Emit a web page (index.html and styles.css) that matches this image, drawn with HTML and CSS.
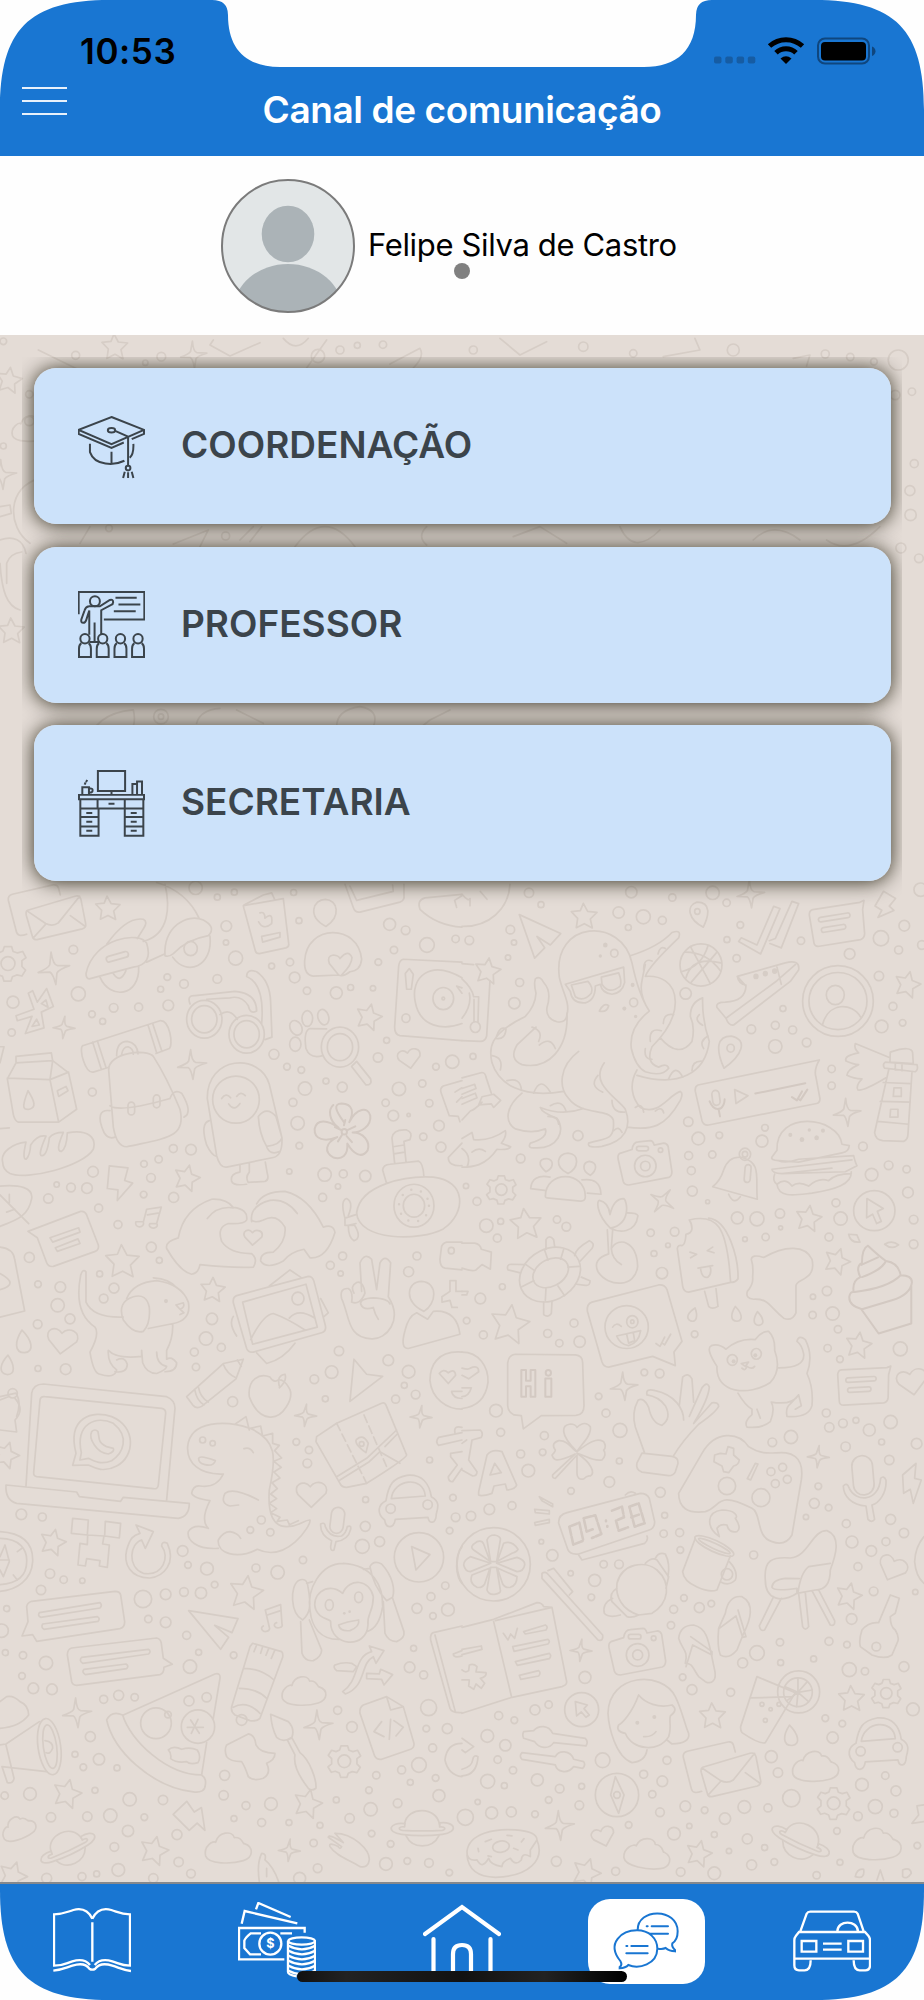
FILE: index.html
```html
<!DOCTYPE html>
<html lang="pt-BR">
<head>
  <meta charset="UTF-8">
  <meta name="viewport" content="width=device-width, initial-scale=1.0">
  <title>Canal de comunicação</title>
  <link rel="stylesheet" href="styles.css">
</head>
<body>
  <div class="screen">
    <header class="header">
      <svg class="header-shape" viewBox="0 0 924 156">
        <path d="M0 156V110C0 30 28 0 110 0H212Q228 0 228 15C228 50 247 67 280 67H644C677 67 696 50 696 15Q696 0 712 0H814C896 0 924 30 924 110V156Z"/>
      </svg>
      <div class="status-bar">
        <span class="time">10:53</span>
        <svg class="status-icons" viewBox="0 0 164 28" width="164" height="28">
          <g fill="#165ca3">
            <rect x="0" y="19.500" width="7.500" height="7" rx="2"/>
            <rect x="11.300" y="19.500" width="7.500" height="7" rx="2"/>
            <rect x="22.600" y="19.500" width="7.500" height="7" rx="2"/>
            <rect x="33.800" y="19.500" width="7.500" height="7" rx="2"/>
          </g>
          <g fill="none" stroke="#000" stroke-width="5">
            <path d="M55.500 9C65 .500 79 .500 88.500 9"/>
            <path d="M62 15.800C67.500 10.500 76.500 10.500 82 15.800"/>
          </g>
          <path d="M72 27l-5.500-5.500q5.500-4.500 11 0z"/>
          <rect x="104" y="1.500" width="51" height="25" rx="7" fill="none" stroke="#0f467e" stroke-width="2"/>
          <rect x="107" y="5" width="45" height="18.500" rx="4"/>
          <path d="M158 9.500q3.500 1.500 3.500 4.700t-3.500 4.800z" fill="#0f467e"/>
        </svg>
      </div>
      <div class="title-bar">
        <button class="menu-btn" aria-label="Menu"><span></span><span></span><span></span></button>
        <h1>Canal de comunicação</h1>
      </div>
    </header>

    <section class="student">
      <svg class="avatar" viewBox="0 0 134 134" width="134" height="134">
        <defs><clipPath id="round"><circle cx="67" cy="67" r="66"/></clipPath></defs>
        <circle cx="67" cy="67" r="66" fill="#e2e6e7"/>
        <g fill="#abb3b7" clip-path="url(#round)">
          <ellipse cx="67" cy="55" rx="26.300" ry="28.300"/>
          <ellipse cx="67" cy="130" rx="54" ry="45"/>
        </g>
        <circle cx="67" cy="67" r="66" fill="none" stroke="#7b7b7b" stroke-width="2"/>
      </svg>
      <span class="student-name">Felipe Silva de Castro</span>
      <span class="page-dot"></span>
    </section>

    <main class="content">
      <svg class="wallpaper" viewBox="0 335 924 1547" aria-hidden="true">
        <defs>
          <path id="star" d="M-3-36L10-12L38-9L18 11L24 38L0 25L-24 37L-20 9L-39-11L-12-14Z"/>
          <path id="sparkle" d="M-3-46Q0-10 12-8L45-6Q15 2 9 12L4 43Q-2 12-10 8L-42 7Q-14-3-9-12Z"/>
          <path id="heart" d="M-4 40L-42 0C-58-28-24-48-4-22C16-46 54-30 42 0Z"/>
          <path id="cloud" d="M-68 25C-75-5-45-22-38-16C-30-48 12-52 18-30C42-34 44-8 48-12C78-2 75 30 45 39C10 50-60 50-68 25Z"/>
          <g id="gear">
            <path d="M-10-46H10L14-33L26-29L40-33L49-16L38-8V8L48 18L38 34L24 31L12 36L8 48H-11L-15 35L-27 30L-39 33L-49 17L-38 8V-8L-48-18L-38-33L-25-29L-14-34Z"/>
            <circle r="19"/>
          </g>
          <g id="planet">
            <path d="M-53-12C-44-65 44-65 52-8M-49 24C-30 65 30 65 50 24"/>
            <path d="M-52-12C-100-18-110 15-62 20Q0 28 60 20C110 14 100-20 52-14V-2C70-4 72 6 60 8Q0 12-60 8C-75 6-70-5-53-2Z"/>
          </g>
          <g id="car">
            <path d="M-68-2C-60-50-48-70-5-78C40-82 62-54 68-14C95 0 88 20 83 38C82 70 62 68 58 48L-40 54C-44 82-68 84-72 56C-98 35-90 8-68-2Z"/>
            <path d="M-52-8C-45-68 45-78 50-16Z"/><circle cx="-54" cy="22" r="14"/><circle cx="57" cy="10" r="14"/>
          </g>
          <g id="mail">
            <path d="M-53 62Q-80 72-84 54L-108-40Q-110-54-96-58L26-86Q38-88 42-78L48-56"/>
            <path d="M-50-10L92-52Q106-56 110-42L124 30Q126 42 114 46L-22 78Q-34 80-36 68L-54 6Q-57-7-50-10ZM-52-8L4 30Q25 40 42 28L106-52M-34 74L5 31M122 38L78 6"/>
          </g>
          <g id="camera">
            <path d="M-80-30L-42-42Q-38-66-22-66L16-70Q24-70 28-56L58-62Q68-62 72-52L84 28Q84 42 74 46L-52 70Q-66 70-70 58L-86-12Q-88-26-80-30Z"/>
            <circle cy="10" r="34"/><circle cy="10" r="15"/><rect x="-28" y="-52" width="38" height="14" rx="7"/><circle cx="48" cy="-40" r="7"/>
          </g>
          <g id="note">
            <path d="M-70-44L72-66L84-72L80-44L86 28Q86 42 74 46L-50 66Q-64 68-66 56L-80-28Q-80-42-70-44Z"/>
            <rect x="-50" y="-28" width="96" height="14" rx="7" transform="rotate(-9)"/><rect x="-46" y="4" width="74" height="14" rx="7" transform="rotate(-9)"/>
          </g>
          <path id="bolt" d="M-32-52L24-46L14-8L38 0L-8 52L-6 20L-38 16Z"/>
          <path id="drop" d="M-6-34C-28 0-30 34 2 34C34 30 22-6-6-34Z"/>
        </defs>

        <!-- strips around the cards -->
        <g class="doodle" id="area-top" transform="translate(0 340) scale(.3333)">
          <path d="M115 30L230 86M640 0L630 15L690 48L780 8M850-5Q888 40 925-5M1170 72L1260 25Q1275 50 1240 84M920 84L980 0"/>
          <path d="M120 415C20 440 20 560 90 610M0 500L30 495L34 520L0 530M0 600C40 585 70 600 78 640M0 670C5 750 20 800 60 810M20 730V670Q30 640 65 636"/>
          <path d="M520 612L625 570L600 620M720 600L760 560M750 605L785 560M885 620Q975 500 1065 620M1280 560Q1250 590 1280 615M240 610L270 560"/>
          <path d="M260 1220Q280 1120 400 1110Q410 1150 390 1180M590 1150Q600 1110 660 1105M710 1110L790 1150M1010 1160Q1010 1110 1080 1100Q1140 1110 1120 1160M1240 1180L1290 1140L1350 1110"/>
          <path d="M2380 55L2430 45L2420 78M2330 330L2450 270Q2480 260 2490 290L2550 380Q2560 400 2530 410L2360 440M2350 345L2440 320M2350 375L2450 348M2480 600Q2550 650 2640 560"/>
          <path d="M1990 50L2100 30L2085-5M1500-5L1560 45L1640 5M2260 600Q2320 540 2400 600M1540 590L1620 560L1700 610M1860 560Q1900 650 1980 570"/>
        </g>

        <g class="doodle" id="area-a" transform="translate(0 870) scale(.3333 .3571)">
          <!-- scooter -->
          <path d="M430 200C510 180 510 100 495 40M470 35Q560 60 598 136M320 208Q380 130 430 138Q445 145 430 165L412 192M258 290C280 190 420 170 440 205Q460 265 400 272L268 305Q258 304 258 290ZM440 258L492 236M495 240C490 160 560 120 610 140Q650 160 625 184Q560 195 520 234Q505 245 495 240ZM300 300C330 365 420 355 416 270M518 244C560 300 640 270 630 185M340 290Q360 320 378 282"/>
          <circle cx="572" cy="220" r="20"/><rect x="-34" y="-8" width="68" height="16" rx="8" transform="translate(352 243) rotate(-15)"/>
          <!-- seed packet, person -->
          <path d="M730 100L850 80L866 205Q868 215 858 218L778 234Q768 234 766 226L732 108ZM732 98L790 70L815 64L824 82M780 120Q795 115 795 135Q820 115 815 150Q790 170 776 145M785 186L840 175V188L788 202Z"/>
          <path d="M978 158C920 130 940 82 976 82C1014 84 1024 130 978 158ZM1016 294L940 297Q912 295 914 255C920 150 1075 150 1085 250Q1082 282 1050 285Q1030 300 1016 294L988 262Q980 240 1000 238Q1018 240 1020 248Q1045 220 1056 245Q1056 265 1026 293"/>
          <path d="M1035 40L1060 105Q1065 120 1080 118L1200 90Q1215 85 1212 70V40M1050 45L1070 85L1180 60L1178 42M1386 68L1275 78Q1250 85 1260 110Q1310 155 1386 160M1370 105L1364 85L1386 72"/>
          <!-- bluetooth, carton, bread -->
          <path d="M85 345L98 338L112 370L140 332L160 382L124 398L132 442L76 458L96 410L52 422L48 408L102 390Z"/>
          <path d="M124 374L138 364L144 384ZM96 438L110 418L118 434Z"/>
          <path d="M48 538V522L154 512L158 534L206 568L230 670L176 706L55 706Q45 704 40 685L22 585L48 540L158 534M22 583L150 587L206 566M158 534L150 587L176 706M84 618C60 675 75 670 88 670C108 665 106 650 84 618ZM172 618L198 606L204 618L176 634Z"/>
          <path d="M8 818C0 790 40 765 78 762Q66 810 78 810Q90 800 92 770Q112 740 138 745Q112 800 126 800Q142 798 148 750Q160 735 190 735Q165 788 184 788Q200 780 202 736C265 725 290 750 280 782C250 830 80 870 30 850Q8 840 8 818Z"/>
          <!-- backpack -->
          <path d="M248 492L480 422C510 420 520 490 508 500L468 514M248 492C236 500 255 570 280 566L324 553M278 482L304 558M292 478L318 553M444 434L470 512M458 430L486 508M350 520Q350 480 382 480Q412 485 414 515M364 520Q368 495 384 495Q400 500 400 516M326 560C325 510 440 500 460 522Q500 580 540 670C560 750 500 750 380 775Q350 775 340 720ZM330 660Q360 680 510 640M330 674C300 670 290 690 312 735Q325 755 345 748M510 640Q520 612 545 625Q580 680 552 692"/>
          <rect x="384" y="650" width="20" height="36" rx="10"/><rect x="460" y="630" width="20" height="36" rx="10"/>
          <!-- glasses -->
          <circle cx="613" cy="418" r="53"/><circle cx="613" cy="418" r="38"/><circle cx="740" cy="460" r="53"/><circle cx="740" cy="460" r="38"/>
          <path d="M570 375Q560 350 585 352L705 340Q770 345 770 395Q750 405 745 380Q725 350 690 358L620 362M660 405Q690 385 712 418M785 430Q795 320 740 298Q740 275 770 285Q810 310 812 370L816 468L795 475"/>
          <!-- paw and magnifier -->
          <circle cx="1020" cy="496" r="56"/><circle cx="1020" cy="496" r="38"/>
          <path d="M980 445L930 444Q910 450 918 500Q930 530 968 520M1055 550L1070 536L1112 585Q1118 602 1098 602Z"/>
          <ellipse cx="888" cy="442" rx="17" ry="22" transform="rotate(-35 888 442)"/><ellipse cx="922" cy="416" rx="16" ry="22"/><ellipse cx="970" cy="412" rx="16" ry="22" transform="rotate(-20 970 412)"/><ellipse cx="886" cy="488" rx="17" ry="20"/>
          <!-- penguin suit -->
          <path d="M622 640C620 520 780 510 808 600L846 750Q848 800 820 805L680 832Q660 835 650 800ZM628 702Q600 710 620 770Q635 800 650 802M775 690Q800 660 828 690L846 750Q840 770 800 774Q778 740 775 690ZM720 826V846Q690 850 695 872Q700 885 740 880M748 822V846Q735 860 745 875L795 872Q808 868 802 850L796 818M800 775Q810 800 840 788"/>
          <ellipse cx="708" cy="643" rx="70" ry="66"/><path d="M665 640Q678 622 692 638M710 634Q722 618 736 632M686 655Q702 678 720 654"/>
          <!-- flower -->
          <path class="strong" d="M1032 706C1005 672 1000 655 1025 654C1060 655 1062 680 1048 706C1070 665 1105 662 1111 688C1115 720 1080 734 1058 735C1090 735 1112 760 1103 785C1085 810 1060 795 1042 766C1045 800 1025 812 1000 805C972 790 975 765 1012 748C975 762 942 755 944 725C950 695 985 700 1016 722C985 700 985 670 1000 658"/>
          <path class="strong" d="M1032 715L1036 700M1044 728L1066 718M1040 745L1056 762M1026 742L1014 760M1024 728L1005 720"/><circle class="strong" cx="1033" cy="733" r="8"/>
          <!-- turntable -->
          <path d="M1386 258L1210 250Q1198 252 1196 270L1184 440Q1184 462 1200 464L1386 478M1216 290L1228 276L1240 292L1234 334H1220ZM1386 330L1370 325L1386 345"/>
          <path d="M1386 302C1290 250 1230 300 1246 370C1260 440 1330 450 1386 430"/><circle cx="1330" cy="360" r="31"/><circle cx="1330" cy="360" r="4"/><circle cx="1218" cy="415" r="12"/>
          <!-- submarine -->
          <path d="M1070 960C1080 880 1220 855 1300 860C1400 870 1400 960 1330 1005C1260 1040 1075 1040 1070 960ZM1160 878L1148 840Q1150 825 1170 824L1255 815Q1270 820 1272 860M1184 820L1176 750Q1180 725 1220 728Q1240 735 1230 755L1212 760L1218 816M1180 775L1212 770M1182 795L1214 790M1068 965L1035 975Q1020 925 1040 920Q1062 930 1045 968M1068 990L1045 995Q1045 1030 1062 1038Q1088 1030 1062 992M1035 975V995H1060"/>
          <circle cx="1242" cy="940" r="60"/><circle cx="1242" cy="940" r="32"/><circle class="dots" cx="1242" cy="940" r="45"/>
          <!-- leaf, cards at the left edge -->
          <path d="M0 885C60 880 100 890 95 920C85 970 50 980 0 998M0 910L86 990M28 932V908M44 950L20 958M0 724L28 722M0 540L12 495H0M0 1056Q40 1060 44 1090L74 1235L0 1252M0 1130Q60 1160 0 1175M0 1475L48 1465Q65 1490 50 1530"/>
          <path d="M84 1012L242 956Q254 954 260 966L295 1050Q298 1064 286 1068L160 1110Q145 1112 140 1100L112 1030ZM150 1030L236 1002L240 1014L158 1042ZM166 1058L234 1033L240 1046L172 1068Z"/>
          <path d="M430 986L440 950L484 944L470 990M430 986A12 10 0 1 1 408 985H430M470 990A12 8 0 1 1 450 990H470M442 966L478 960"/>
          <!-- heart hands -->
          <path d="M535 1030Q550 950 635 922Q680 920 700 945Q745 950 740 980Q735 992 685 990Q650 1000 665 1040Q690 1075 755 1074Q775 1090 760 1112Q700 1115 600 1105Q595 1130 575 1132Q540 1125 500 1060Q495 1040 535 1030M622 976Q650 940 700 946M755 985Q748 940 810 925Q860 920 892 962M770 935Q790 900 855 900Q925 915 970 1000Q1000 990 1005 1015Q980 1090 930 1086L912 1062Q870 1070 850 1095Q800 1120 782 1095Q780 1070 820 1070Q860 1040 855 1000Q830 960 790 980Q765 990 755 980"/>
          <!-- dog -->
          <path d="M370 1252Q280 1255 258 1210V1125Q248 1115 242 1135Q220 1240 285 1280Q300 1300 270 1350Q280 1410 300 1412Q345 1425 350 1400Q322 1380 325 1345Q350 1370 425 1362V1345L428 1380Q440 1410 470 1410Q500 1400 500 1390Q470 1385 470 1350M345 1405Q380 1410 382 1385Q375 1360 350 1372M495 1405Q530 1405 530 1380Q515 1360 500 1370V1345Q520 1310 518 1272M380 1200Q400 1155 470 1150Q545 1160 565 1210Q575 1260 520 1270L445 1284M400 1195Q440 1185 448 1225Q452 1270 430 1292Q400 1300 370 1260Q350 1210 400 1195ZM460 1142Q510 1145 530 1170"/>
          <circle class="ink" cx="498" cy="1207" r="6"/><path d="M528 1218L550 1212Q556 1224 540 1230ZM540 1230L552 1240L540 1245"/>
          <!-- pictures -->
          <path d="M710 1192L925 1138Q938 1138 942 1152L976 1275Q980 1292 965 1296L760 1350Q745 1352 740 1340L700 1212Q698 1196 710 1192ZM728 1210L918 1160L952 1280L758 1328ZM752 1315Q790 1245 820 1242Q860 1255 915 1288M868 1255Q895 1225 945 1255M808 1165L870 1120L902 1140M770 1352L800 1382Q850 1370 885 1325M700 1250Q685 1270 710 1305M962 1200L985 1240L970 1252"/><circle cx="894" cy="1200" r="18"/>
          <!-- peace hand, person -->
          <path d="M1085 1180L1080 1100Q1095 1070 1115 1090L1130 1175L1140 1100Q1155 1075 1172 1100L1165 1195C1210 1260 1160 1315 1115 1313C1040 1310 1050 1250 1025 1200Q1018 1170 1045 1172Q1060 1180 1055 1210Q1080 1220 1095 1185Q1090 1150 1070 1155Q1050 1165 1062 1185M1082 1215Q1080 1200 1120 1198Q1165 1200 1170 1215M1082 1215Q1090 1235 1120 1225Q1125 1245 1135 1258"/>
          <path d="M1272 1236C1210 1210 1220 1152 1265 1152C1315 1155 1310 1215 1272 1236ZM1250 1240L1283 1258L1300 1236Q1370 1230 1380 1300L1225 1340Q1200 1340 1215 1290Q1225 1250 1250 1240ZM1350 1150H1368V1180H1386M1350 1150V1180L1326 1195V1210L1350 1205L1356 1225H1372"/>
          <path d="M1386 590L1330 605Q1318 612 1324 625L1348 688L1375 690L1380 705M1386 610L1365 622M1386 635L1370 650M1386 765L1345 805Q1345 830 1386 828M1386 1042H1340Q1325 1045 1324 1060L1320 1090Q1320 1112 1335 1115L1386 1120"/><circle cx="1354" cy="1066" r="9"/>
          <!-- pencil, apple, cursor -->
          <path d="M560 1475L670 1382L730 1370L708 1425L605 1502Q590 1510 580 1500ZM670 1384Q680 1410 708 1422M596 1450Q600 1475 625 1490M585 1458Q590 1485 612 1498M712 1372L724 1390"/>
          <path d="M810 1420C780 1408 742 1425 748 1475Q770 1530 810 1532C850 1535 880 1480 870 1455Q850 1420 830 1430Q820 1435 810 1420ZM838 1445Q830 1415 855 1412Q862 1430 838 1450M1062 1370L1100 1412L1148 1418L1050 1488Z"/>
          <path d="M1386 1350C1310 1345 1290 1390 1290 1430C1295 1480 1340 1510 1386 1510M1318 1410Q1330 1395 1345 1408Q1365 1395 1367 1415L1345 1438ZM1355 1460H1386M1355 1462Q1360 1480 1386 1480"/>
        </g>

        <g class="doodle" id="area-b" transform="translate(462 870) scale(.3333 .3571)">
          <path d="M0 158C80 160 140 110 144 40M0 68Q20 90 24 80V100M55 60L75 82M172 125L296 178L265 210L225 186L248 218L218 247Z"/>
          <!-- octopus -->
          <path d="M315 405C325 370 300 340 292 300C270 140 480 130 510 260Q530 350 562 395Q500 440 508 500Q520 550 550 565Q600 580 620 555Q615 540 590 552Q550 540 570 495Q640 430 640 370C640 310 590 295 550 298Q560 270 650 190Q660 165 630 175Q590 215 505 240M562 395Q530 350 540 310Q545 285 550 265M595 470Q650 530 690 480Q700 440 685 410Q685 370 722 358Q720 420 742 480C730 570 650 610 525 575M315 400Q315 430 285 425Q250 415 255 385Q270 340 245 315Q235 295 220 305Q215 320 222 345Q220 380 190 410C80 460 80 500 90 540C110 600 180 640 305 620M222 440L165 490Q140 530 180 545C260 560 320 500 315 400M350 508C290 550 290 610 320 640C360 690 440 665 454 700C460 760 430 750 380 765Q375 780 420 774C490 760 510 720 490 670C470 640 380 600 427 540M180 625C140 655 120 700 160 725Q210 740 250 725Q260 750 205 765Q195 780 220 778C290 780 310 730 285 695Q240 680 235 665Q300 690 365 668M525 560C500 600 510 640 535 665C590 690 620 630 655 620Q665 625 655 645C610 720 570 730 495 720"/>
          <path d="M310 320L485 272L488 315Q480 345 450 348Q420 345 415 320L400 325Q400 365 370 372Q330 375 325 340ZM328 322L378 312Q395 330 388 345Q365 370 340 355ZM418 300L470 288Q480 310 475 325Q440 350 420 320ZM412 395Q425 370 440 380Q435 400 412 395"/>
          <path d="M104 465Q115 435 132 445Q130 475 104 472M90 520Q125 525 115 560M135 590Q175 580 178 615M215 625Q235 575 265 622M210 440Q245 450 230 480M232 490Q265 465 280 500M265 660Q300 640 312 675M258 690Q290 690 290 712M408 575Q380 605 422 622M450 645Q450 680 488 678M455 730Q470 715 480 735M545 280Q545 245 570 255M588 235Q595 210 610 220M604 430Q605 400 635 405M565 480Q560 440 598 450M712 405Q695 420 722 435M738 465Q710 480 725 500M690 562Q690 535 718 535M620 585Q640 540 662 580M550 500Q545 530 570 530M520 665Q540 650 545 678M580 675Q600 660 605 680"/>
          <circle cx="457" cy="233" r="11"/><circle cx="515" cy="371" r="12"/><circle class="ink" cx="430" cy="210" r="7"/><circle class="ink" cx="415" cy="241" r="5"/><circle class="ink" cx="512" cy="322" r="6"/><circle class="ink" cx="487" cy="388" r="6"/><circle class="ink" cx="521" cy="410" r="5"/>
          <!-- ball, pins, checks -->
          <ellipse cx="717" cy="266" rx="63" ry="59"/><path d="M685 214L745 318M658 285Q720 270 738 212M670 230Q735 230 776 283M688 314L765 230M672 302Q690 240 776 260"/>
          <path d="M724 160C680 140 670 100 705 90C750 90 740 130 724 160ZM786 555C760 500 765 465 808 465C860 475 840 520 786 555Z"/><circle cx="706" cy="116" r="8"/><circle cx="806" cy="499" r="11"/>
          <path d="M830 200L838 190L885 210L935 102L954 108L896 235ZM922 198L940 192L990 88L1010 94L958 218L924 206"/>
          <!-- shoe, contact -->
          <path d="M826 298L970 260Q1015 250 1010 280L985 312L815 434Q800 436 792 415L765 385Q760 370 790 370Q850 368 852 325ZM792 415L945 310L1000 265M826 298Q830 320 852 322M945 272L958 320"/><circle class="ink" cx="882" cy="298" r="8"/><circle class="ink" cx="910" cy="290" r="8"/><circle class="ink" cx="938" cy="283" r="8"/>
          <ellipse cx="1128" cy="367" rx="106" ry="99"/><ellipse cx="1128" cy="367" rx="87" ry="80"/><circle cx="1120" cy="350" r="27"/><path d="M1082 432C1100 370 1170 370 1196 412"/>
          <path d="M0 262L35 265M84 310L74 465Q70 480 55 480L0 478M0 305Q30 330 35 355H50L48 425M36 362V425M0 415Q30 380 22 345"/><circle cx="40" cy="440" r="15"/>
          <path d="M0 582L60 567Q70 568 72 580L88 625M0 612L38 600L42 612L0 628M0 640L40 625L45 638L0 656M60 635L95 628L116 645L95 665L88 655L50 658ZM60 650Q40 670 25 675L0 700"/>
          <!-- voice note -->
          <path d="M708 602L1072 532Q1055 560 1062 580L1074 640Q1074 652 1064 654L740 714Q725 716 720 702L700 620Q698 606 708 602ZM818 615L858 632L822 654Z"/>
          <rect x="751" y="617" width="22" height="42" rx="11" transform="rotate(-8 762 638)"/><path class="strong" d="M743 648Q755 675 775 668Q788 660 788 642M770 670L774 690M880 626L1030 597M990 636L1005 645L1020 620M1008 640L1015 645L1036 615"/>
          <!-- lighthouse -->
          <path d="M1285 510Q1350 490 1352 512L1354 542L1284 538ZM1270 538L1365 545Q1370 560 1360 565L1268 555Q1260 545 1270 538ZM1280 560L1238 735Q1240 755 1262 758L1325 760Q1338 755 1338 740L1350 566M1264 595L1346 598M1255 648L1345 650M1246 704L1340 712M1296 610H1318V634H1294ZM1286 670H1308V692H1284ZM1284 526L1180 486Q1175 500 1190 512Q1145 520 1152 535Q1175 545 1190 545Q1155 560 1155 575Q1175 585 1200 585Q1180 605 1188 616Q1205 620 1272 582M1300 540V560M1320 542V562"/>
          <!-- burger -->
          <path d="M945 785C940 670 1130 690 1140 768L1162 772Q1160 790 1140 792L1010 818L950 814Q925 812 930 804ZM950 814Q970 822 1010 810L1175 800Q1180 820 1185 828L1150 845L960 850Q930 850 930 838L1170 812M938 852Q930 870 945 880C950 920 1000 910 1050 905C1120 895 1170 880 1168 845M945 880Q970 860 990 885Q1010 870 1040 885Q1070 860 1100 870Q1120 850 1168 850M960 850L1110 835"/><g class="ink"><circle cx="985" cy="742" r="6"/><circle cx="1020" cy="755" r="7"/><circle cx="1042" cy="728" r="5"/><circle cx="1064" cy="750" r="7"/><circle cx="1083" cy="730" r="6"/></g>
          <!-- fish, group -->
          <path d="M0 752L30 735L35 755Q85 760 130 730Q135 745 118 765L146 775Q140 785 105 782C70 830 30 832 0 832M30 790Q50 775 70 788M0 780Q30 800 15 832"/>
          <path d="M318 850C275 830 285 794 318 793C355 795 350 835 318 850ZM250 914C250 840 370 840 370 915Q370 928 355 927L262 919Q250 918 250 914ZM252 845C225 825 232 808 254 808C278 812 275 835 252 845ZM385 855C355 840 365 818 382 816C408 820 405 840 385 855ZM264 860Q210 850 206 892L248 897M360 868Q415 860 417 908L376 905"/>
          <!-- bell -->
          <path d="M752 887Q775 870 785 840Q800 800 840 805C900 820 880 860 886 922ZM800 908Q815 940 835 915"/><circle cx="849" cy="796" r="17"/><circle cx="849" cy="796" r="8"/><rect x="848" y="825" width="18" height="50" rx="9" transform="rotate(5 857 850)"/>
          <!-- sprout, turtle, popsicle, blob -->
          <path d="M445 1003C400 960 405 925 412 925Q440 930 444 965Q455 920 485 920C495 925 510 990 445 1003M496 960Q525 960 528 968C520 1020 470 1015 445 1003M436 1008L440 1075M452 1008L448 1060M440 1075Q390 1090 408 1125C440 1170 520 1170 527 1110C525 1040 470 1025 448 1060Q450 1090 478 1105"/>
          <ellipse cx="264" cy="1133" rx="95" ry="72" transform="rotate(-25 264 1133)"/><ellipse cx="266" cy="1128" rx="56" ry="38" transform="rotate(-25 266 1128)"/>
          <path d="M252 1062V1035Q262 1020 275 1035L278 1055M338 1080Q340 1060 382 1038Q400 1045 390 1060L355 1095M175 1128L138 1120Q132 1105 148 1104L188 1105M358 1140L384 1150Q385 1165 370 1163L344 1160M245 1210V1245Q258 1255 268 1242L270 1208M248 1065L258 1092M305 1062L296 1090M352 1110L318 1112M178 1168L215 1150M250 1205L252 1170M308 1192L288 1165M192 1105L218 1122"/>
          <path d="M682 980C770 960 790 1010 802 1110L806 1155L680 1182Q665 1182 662 1165L646 1060Q648 1048 660 1052Q670 1050 672 1020Q688 1018 690 1005Q690 990 682 980ZM740 975C800 980 830 1090 828 1145Q820 1155 806 1155M728 1180L740 1222Q750 1232 768 1222L762 1172M684 1070L704 1076L686 1086M752 1056L736 1066L756 1072M708 1115L752 1108M716 1118Q720 1145 738 1140Q750 1130 745 1112"/>
          <path d="M868 1090Q870 1075 905 1085C970 1050 1030 1050 1050 1090C1065 1150 1000 1145 1002 1165V1240Q990 1265 965 1255C920 1220 920 1200 875 1202Q850 1200 856 1180Q875 1160 872 1140Q875 1110 868 1090Z"/>
          <!-- cursor, ice cream -->
          <ellipse cx="1237" cy="954" rx="62" ry="56"/><path d="M1215 920L1264 948L1246 956L1258 984L1244 990L1232 964L1214 974Z"/>
          <path class="strong" d="M1218 1052Q1250 1080 1272 1095Q1310 1100 1316 1135Q1350 1135 1350 1155Q1345 1190 1290 1205L1200 1230Q1160 1220 1162 1195Q1165 1180 1175 1182Q1170 1150 1195 1140Q1180 1110 1200 1100Q1200 1060 1218 1052ZM1200 1140Q1260 1120 1272 1095M1178 1182Q1280 1170 1316 1135M1198 1230L1250 1298L1348 1270V1165M1198 1106L1248 1085"/>
          <path d="M1160 1020L1185 1022L1194 1042Q1165 1045 1160 1020ZM1268 1048Q1290 1035 1310 1050Q1290 1065 1268 1048Z"/>
          <path d="M0 1045H38Q55 1048 58 1062L88 1070L85 1118L60 1105L42 1120Q30 1125 0 1115M0 1180H18L14 1190H0"/>
          <!-- wink bubble -->
          <path d="M390 1210L590 1162Q608 1160 615 1175L660 1320L636 1350L640 1388L572 1362L440 1392Q425 1392 420 1378L376 1235Q374 1215 390 1210ZM452 1280Q462 1265 478 1278M464 1305L536 1290Q530 1325 500 1332Q475 1330 464 1305ZM494 1300L500 1325L518 1318L514 1296M582 1326L594 1334L608 1308M600 1324L608 1330L626 1300"/><ellipse cx="494" cy="1280" rx="65" ry="60"/><circle cx="511" cy="1265" r="17"/><circle cx="511" cy="1265" r="5"/>
          <!-- hi bubble -->
          <path d="M160 1356L340 1358Q362 1360 362 1380L366 1500Q366 1526 342 1527L238 1528L184 1565L178 1528L156 1526Q138 1518 137 1500V1380Q140 1358 160 1356Z"/>
          <path class="strong" d="M178 1400H192V1430H206V1400H220V1475H206V1446H192V1475H178ZM250 1424H268V1475H250Z"/><circle class="strong" cx="259" cy="1408" r="8"/>
          <path d="M0 1350C50 1350 80 1390 78 1435C70 1490 30 1505 0 1508M0 1395Q20 1400 25 1395Q50 1385 50 1405L20 1425L0 1415M0 1450H28Q20 1475 0 1475"/>
          <!-- cat -->
          <path d="M765 1390Q730 1340 748 1332Q770 1325 792 1342Q830 1310 880 1315Q900 1290 920 1292Q940 1310 938 1345Q960 1400 925 1435C860 1475 760 1465 765 1390ZM948 1394Q1030 1395 1025 1355Q1020 1330 1005 1320Q1010 1300 1030 1315Q1055 1360 1035 1410Q1055 1450 1050 1500Q1040 1535 975 1530Q970 1505 985 1495L1010 1470L1018 1500L1000 1510M828 1465Q850 1500 870 1510V1525Q845 1545 855 1560Q900 1565 925 1545Q940 1510 928 1490Q990 1500 1010 1470M885 1510L895 1535M840 1395Q850 1405 855 1390Q870 1400 878 1390M838 1382L860 1378L850 1390Z"/><circle cx="811" cy="1372" r="15"/><circle cx="883" cy="1355" r="15"/><circle class="ink" cx="815" cy="1376" r="6"/><circle class="ink" cx="880" cy="1359" r="6"/>
          <!-- hand -->
          <path d="M548 1633L520 1560Q508 1520 528 1485Q545 1475 560 1505Q570 1550 600 1555Q630 1535 610 1500Q590 1475 555 1470Q550 1450 580 1458C640 1470 665 1510 665 1540M652 1500L662 1420Q678 1405 690 1425L695 1490M682 1530L720 1450Q735 1430 742 1448Q740 1480 695 1550L750 1492Q770 1490 770 1502Q760 1520 710 1552Q660 1600 635 1640M540 1633L630 1642Q650 1645 648 1662L640 1685Q635 1696 620 1696L540 1686Q520 1680 525 1660Z"/>
        </g>

        <g class="doodle" id="area-c" transform="translate(0 1380) scale(.3333)">
          <!-- laptop -->
          <path d="M78 318L95 40Q100 12 130 12L500 50Q525 60 525 85L500 360M120 60Q122 48 135 50L485 85Q498 88 497 100L475 315Q474 328 460 326L110 290Q100 288 101 278ZM18 315L230 336L238 350L362 364L370 352L568 370Q568 410 535 415L50 370Q15 360 18 315ZM218 256L228 220C200 110 280 90 335 110C410 140 405 230 350 258C310 280 280 262 265 255ZM240 240L244 218C225 130 290 105 340 130C390 170 370 220 335 242C305 255 285 245 265 235ZM275 155Q285 145 294 155L298 178Q300 190 320 200L340 205Q345 215 325 222C290 220 265 175 275 155Z"/>
          <!-- dino -->
          <path d="M625 445Q600 420 630 362Q580 355 575 340Q580 315 600 318Q650 325 670 282C600 285 560 250 563 200C570 120 680 120 750 145C830 180 830 230 808 330Q800 440 860 440C900 440 910 420 930 420C935 435 860 550 772 508C710 540 650 520 655 480Q670 455 690 455Q715 460 722 475M655 505C590 510 560 480 565 455Q580 430 625 445M775 360Q700 320 675 340Q660 370 690 378L716 375M706 132L738 110L748 150M750 145L782 138L788 168L818 160V190L838 196L824 212L845 234L822 244L844 262L822 276L840 294L816 308L832 326L812 342L830 356L808 370L830 386L812 398L840 412L832 424L862 420L868 434L895 422M596 235Q600 225 646 242Q640 260 615 254Q595 250 596 235ZM732 206Q750 200 760 218"/><g><circle cx="608" cy="180" r="9"/><circle cx="638" cy="190" r="8"/><circle cx="784" cy="420" r="12"/><circle cx="751" cy="450" r="10"/><circle cx="811" cy="457" r="11"/></g>
          <!-- map, car, mic, play -->
          <path d="M950 170L1010 130L1145 70Q1155 65 1160 80L1220 225Q1220 235 1100 310L1040 322Q1025 322 1020 310L948 185ZM1010 290L1100 235L1190 150M1020 300L1108 245L1140 215L1200 250M1155 200L1192 162"/>
          <path stroke-dasharray="8 4" d="M1010 130L1100 310M1092 105L1160 260"/><path d="M1098 218Q1060 190 1070 178Q1090 160 1105 190Z"/><circle cx="1085" cy="192" r="7"/>
          <rect x="992" y="382" width="40" height="78" rx="20" transform="rotate(7 1012 421)"/><path d="M962 432Q975 425 976 440Q990 475 1025 468Q1038 460 1042 440Q1055 435 1052 448Q1045 480 1008 485L1002 510Q992 515 992 500L995 482Q960 465 962 432Z"/>
          <circle cx="1257" cy="532" r="74"/><path d="M1235 500L1290 524L1248 570Z"/>
          <path d="M1386 158L1316 172Q1305 185 1316 196L1386 180M1386 142Q1360 135 1365 160M1386 215L1352 220V230L1372 255L1345 290Q1345 305 1358 305L1386 265"/>
          <!-- compass, blocks, reload -->
          <path d="M0 455C80 460 100 500 98 545C95 600 50 630 0 634M0 475C60 475 82 510 80 545C80 590 50 610 0 614M0 530L15 495L28 545L10 590L0 570M0 540H28M52 515L66 505M40 585L52 600M0 60L25 50M0 150L50 156L45 120Q75 90 45 55"/><circle cx="38" cy="40" r="14"/>
          <path d="M218 415L265 420L262 465L214 460ZM316 424L362 430L358 474L314 468ZM263 465L312 468L308 492L328 495L322 562L298 558L300 542L260 536L256 558L234 555L240 490L262 494Z"/>
          <path d="M420 460L408 435L460 455L436 505L425 480C390 490 380 560 430 580C490 590 510 530 485 498Q485 482 502 490C530 550 490 590 450 594C390 595 370 550 380 510C390 475 400 465 420 460Z"/>
          <!-- chat bubbles, plane -->
          <path d="M95 664L345 634Q360 634 362 645L374 725Q374 742 360 746L110 784L98 764L66 768L84 725L80 680Q82 668 95 664ZM118 698L300 668Q308 676 300 684L122 712Q112 706 118 698ZM128 732L292 710Q302 716 294 724L132 748Q122 742 128 732Z"/>
          <path d="M215 804L470 774Q482 776 484 790L490 835L517 853L492 862Q492 880 480 884L230 916Q218 916 215 905L202 825Q202 808 215 804ZM245 832L445 808Q455 814 446 822L248 850Q236 842 245 832ZM252 868L378 852Q388 858 380 866L256 884Q244 876 252 868Z"/>
          <path d="M566 692L714 716L696 758L644 736L686 772L662 808Z"/>
          <path d="M808 742L796 690L842 674L846 732M802 705L842 692M846 732A12 8 0 1 1 830 728M808 742A12 9 0 1 1 790 738"/>
          <!-- monkey -->
          <path d="M1030 550C960 550 920 630 930 690C935 740 960 780 1020 778M1030 550C1120 555 1150 620 1148 680C1140 730 1120 750 1100 755M1028 640C980 600 930 650 948 690C960 720 990 715 992 725C990 800 1100 810 1104 735C1100 700 1120 700 1120 650C1110 600 1050 590 1028 640ZM1016 735Q1040 725 1076 720Q1080 740 1050 752Q1020 755 1016 735ZM908 720C870 700 870 620 895 602Q920 590 924 620C935 680 930 700 908 720ZM902 725L906 820Q915 845 940 842Q965 830 965 810L928 720M1110 560Q1120 540 1145 552C1180 590 1185 630 1178 652L1160 662Q1120 620 1110 560ZM1150 665L1155 760Q1165 785 1190 785Q1215 775 1212 755L1178 655M920 610L938 605M1090 568L1110 565"/><ellipse cx="988" cy="675" rx="12" ry="16"/><ellipse cx="1076" cy="652" rx="12" ry="16"/><circle class="ink" cx="1033" cy="700" r="4"/><circle class="ink" cx="1049" cy="695" r="4"/>
          <!-- paint, brush, shuffle -->
          <path d="M758 790L845 815Q850 820 848 832L780 1015Q770 1025 750 1022L705 1005Q692 995 695 980L750 800ZM732 865Q780 865 820 898M718 925Q770 925 800 955M700 982Q740 960 780 1000M770 795L762 815M788 800L782 820M806 806L798 826M824 812L814 835"/><circle cx="725" cy="1020" r="16"/>
          <path d="M812 1003L865 1025Q885 1045 876 1072Q850 1090 830 1072Q815 1045 812 1003ZM862 1080L876 1074L900 1118C930 1140 950 1200 948 1225Q935 1235 925 1225C890 1180 880 1150 885 1125Z"/>
          <path d="M1005 855Q1030 845 1055 850L1070 860L1060 875L1010 872Q998 862 1005 855ZM1028 935C1080 900 1060 830 1115 815L1108 798L1152 812L1128 850L1120 830C1080 850 1100 920 1036 942ZM1100 880L1138 882L1142 868L1178 884L1152 915L1145 898L1100 896Z"/>
          <!-- pizza -->
          <path d="M370 1005L645 882Q662 878 660 895L640 1015M620 1088L605 1185M320 1020Q335 990 368 1005C390 1080 500 1185 605 1185Q620 1195 616 1215Q615 1240 580 1236C450 1220 340 1110 320 1020ZM505 1110Q520 1095 545 1108Q570 1100 592 1110Q605 1130 594 1148Q570 1155 560 1145Q530 1150 512 1136Q515 1120 505 1110Z"/><circle cx="468" cy="1030" r="46"/><circle cx="504" cy="1004" r="10"/><circle cx="594" cy="1040" r="50"/><circle cx="567" cy="963" r="15"/><circle cx="620" cy="952" r="14"/><path d="M562 1042H610M572 1020L598 1060M594 1018L574 1060"/>
          <!-- megaphone, code, hot dog -->
          <path d="M0 1095L18 1092L118 1025M18 1095L42 1195Q40 1212 22 1208L6 1160L140 1175M0 1045Q60 1040 86 1005Q85 975 60 965Q40 945 20 950L0 965"/><ellipse cx="148" cy="1100" rx="34" ry="85" transform="rotate(-8 148 1100)"/><ellipse cx="150" cy="1100" rx="20" ry="66" transform="rotate(-8 150 1100)"/><path d="M135 1082Q160 1085 158 1105Q150 1125 138 1118"/>
          <path d="M1090 975L1160 950L1210 980L1242 1090Q1244 1102 1232 1108L1145 1138Q1130 1140 1124 1128L1080 1000Q1078 982 1090 975ZM1160 950L1172 990L1210 980M1145 1025L1122 1055L1152 1070M1172 1018L1168 1078M1182 1022L1210 1042L1188 1068"/>
          <path d="M680 1095L745 1062Q765 1065 768 1095Q780 1120 825 1120Q825 1140 800 1150Q815 1180 790 1195Q760 1205 745 1190Q735 1160 725 1145Q690 1145 680 1130Q672 1110 680 1095Z"/>
          <path d="M1005 1360C1060 1360 1110 1410 1108 1440Q1105 1465 1080 1460C1050 1440 1010 1430 990 1400Q985 1385 1015 1400Q1020 1410 1025 1400L985 1372Q985 1360 1030 1388L1005 1360M778 1505C770 1450 780 1430 785 1420Q800 1420 795 1440Q820 1460 836 1505M800 1465V1490"/>
          <path d="M1386 738L1300 758Q1290 762 1292 780L1350 985Q1355 1000 1386 998M1305 765L1366 995M1386 1090Q1340 1090 1335 1140Q1345 1185 1386 1190M1386 500Q1370 520 1370 560Q1372 595 1386 610M1360 822L1386 812M1360 822Q1360 835 1386 828"/>
        </g>

        <g class="doodle" id="area-d" transform="translate(462 1380) scale(.3333)">
          <!-- letters and clover -->
          <path d="M0 152L55 150Q65 160 58 172L30 180L20 240L45 275Q45 288 32 288L0 270M0 190L14 180M50 335L75 225Q90 205 120 215L164 315Q160 328 135 330L130 312L96 318L90 340Q60 350 50 345ZM84 285L98 250L118 278Z"/>
          <path d="M345 215C290 160 300 135 325 132Q340 132 345 142Q370 120 385 140C390 170 350 200 345 215C400 170 415 180 425 185Q435 200 425 210Q435 225 420 240C390 245 370 225 345 220C390 250 400 280 385 288Q375 285 365 297Q345 300 345 280V225L280 295Q270 295 272 285L340 222C280 250 275 240 270 225Q280 215 280 210Q265 190 290 182C320 180 330 210 345 215Z"/>
          <!-- clock -->
          <path d="M315 398L535 340Q555 340 562 355L578 425Q578 445 562 450L350 522Q325 525 318 510L290 430Q288 405 315 398ZM350 525L360 540L548 490Q560 480 555 468M490 345Q505 330 520 340"/>
          <path class="digits" d="M322 440L352 428L364 482L334 494ZM392 448L374 455L365 415L400 406L418 462L390 474M450 392L480 380L486 412L462 422L470 452L498 442M502 380L530 370L548 430L518 440ZM508 412L536 402M432 422V424M436 438V440"/>
          <path d="M232 350L272 372V380L240 362ZM218 388L262 392V402L220 398ZM218 428L262 418V428L220 436Z"/>
          <!-- gamepad -->
          <path d="M650 340L720 220C760 150 830 155 860 200C920 240 960 200 1000 230Q1025 250 1018 300L990 465Q970 500 930 485C880 470 900 400 870 385C760 330 780 380 730 395Q650 405 650 340ZM775 220L792 222L798 200L815 205V225L832 240Q830 255 815 258L800 278L785 275L780 258L756 245L758 225ZM880 250L888 252L866 300L856 296Z"/><circle cx="795" cy="318" r="26"/><circle cx="897" cy="353" r="27"/><circle cx="927" cy="275" r="12"/><circle cx="962" cy="262" r="12"/><circle cx="940" cy="311" r="12"/><circle cx="976" cy="298" r="12"/>
          <!-- mug, chair -->
          <path d="M700 475L662 575C665 615 740 640 765 630L805 528M802 545Q830 575 820 600Q800 620 775 605M772 470C730 440 735 395 780 390C820 390 830 410 820 415Q840 445 825 455Q800 460 795 435Q775 430 765 445Z"/><ellipse cx="757" cy="498" rx="64" ry="17" transform="rotate(25 757 498)"/><ellipse cx="757" cy="498" rx="52" ry="8" transform="rotate(25 757 498)"/><circle cx="795" cy="583" r="17"/>
          <path d="M910 600C905 540 930 530 985 534C1040 530 1050 450 1095 452C1140 470 1120 530 1105 570Q1105 630 1060 630L1005 640C960 670 910 660 910 600ZM930 622Q930 600 970 595L1012 596M930 622Q935 635 1005 625V640M1105 550L1040 560Q1015 580 1008 640M935 650L892 738Q895 755 908 750L958 655M1010 640L1022 740Q1030 755 1040 740L1030 638M1050 632L1105 735Q1120 740 1118 722L1070 630"/>
          <!-- mic, bolt, guitar -->
          <rect x="1172" y="227" width="62" height="118" rx="31" transform="rotate(-5 1203 286)"/><path d="M1144 318Q1155 305 1162 325C1180 365 1250 370 1256 295Q1265 285 1272 300C1275 340 1250 370 1230 375L1238 418Q1230 430 1218 418L1212 378C1170 375 1145 350 1144 318ZM1322 285L1362 250L1358 295L1378 300L1354 370L1345 328L1325 340ZM1285 645L1312 655L1300 700L1285 710Q1285 740 1300 750Q1315 775 1305 790L1290 825Q1270 840 1230 825L1195 800Q1190 780 1200 750Q1220 725 1250 728Z"/><circle cx="1243" cy="800" r="13"/>
          <!-- orange, brush, croissant, flip-flops -->
          <circle cx="95" cy="553" r="110"/><path d="M86 545L75 480Q80 465 98 465Q118 470 115 480L104 545ZM86 562L75 630Q80 645 98 643Q118 640 115 630L104 562ZM86 550L25 530Q5 540 5 555Q10 575 25 575ZM104 550L165 532Q190 540 188 555Q185 575 165 575ZM84 544L35 510Q20 500 45 485Q60 480 65 492ZM106 544L125 490Q150 480 168 508Q165 515 150 520ZM84 564L30 585Q20 610 45 622Q60 625 68 612ZM106 564L165 590Q165 615 145 622Q130 625 122 612Z"/>
          <path d="M240 580Q250 572 260 585L422 765Q425 785 408 780L240 595ZM258 572L275 565L332 635L322 645"/>
          <path d="M465 610C480 550 550 540 585 570C630 610 620 670 570 700L530 705C480 690 460 650 465 610ZM465 625Q440 640 450 665L495 710Q510 715 530 705M452 655Q420 670 427 700Q440 715 475 705M550 550Q570 530 585 540L620 590L612 625M580 535Q590 515 610 522Q625 550 618 590"/>
          <path d="M650 775Q655 735 695 735C740 745 740 790 758 870C765 900 750 915 730 905L710 890C690 860 690 850 670 850C680 810 660 810 650 775ZM686 770L750 815V825L692 795L672 860M790 700Q800 645 840 650C880 670 865 720 845 760L825 810Q800 840 775 825Q765 800 770 745ZM828 690L852 770L842 772L822 708L772 745"/>
          <!-- book -->
          <path d="M0 742L95 718L225 668Q240 668 245 680L270 682L314 905Q315 915 300 920L150 952L0 1000M95 725L148 948M100 722L270 682M0 808L58 798L60 808L0 824M0 870Q10 880 20 872L22 855Q35 850 45 860L42 876L72 878Q75 890 55 895L68 910L58 925L42 912L35 928L20 918L22 900L0 900M124 760L138 780L146 762L158 775L166 745M185 755L250 735Q260 740 252 750L190 762ZM152 800L258 778Q266 784 258 792L156 814ZM160 845L262 820Q270 826 262 836L166 856ZM172 886L230 872Q238 878 230 888L176 898Z"/>
          <!-- woman -->
          <path d="M530 945C510 1000 480 1030 470 1035Q460 1055 490 1060C510 1110 590 1120 620 1070C630 1040 620 1020 625 1008Q650 990 630 975C590 985 550 970 530 945ZM555 1110Q550 1145 510 1148C460 1130 440 1040 438 1000C440 880 600 870 640 950C660 990 670 1040 680 1060Q685 1090 630 1092L615 1080M545 1070Q570 1072 582 1055"/><circle class="ink" cx="526" cy="1028" r="6"/><circle class="ink" cx="577" cy="1011" r="6"/>
          <circle cx="359" cy="989" r="51"/><path d="M340 965L376 975L366 986L382 1005L372 1012L358 996L344 1008Z"/>
          <!-- drink -->
          <path d="M885 890L1000 938L910 1088Q895 1095 840 1058Q835 1050 836 1040ZM865 954L992 950"/><circle cx="1010" cy="936" r="63"/><circle cx="1008" cy="937" r="43"/><path d="M1008 937V894M1008 937L1036 905M1008 937L1051 930M1008 937L1040 965M1008 937L1004 980M1008 937L975 962M1008 937L968 920"/><g><circle cx="900" cy="973" r="6"/><circle cx="951" cy="973" r="6"/><circle cx="926" cy="988" r="5"/><circle cx="910" cy="1021" r="6"/></g>
          <!-- tools, compass, donut -->
          <path d="M185 1055L215 1052C230 1035 260 1035 272 1060L370 1075Q380 1085 372 1098L275 1088C260 1110 230 1105 218 1085L185 1075Q180 1065 185 1055ZM180 1118L280 1130C290 1110 325 1110 335 1138L365 1145Q372 1155 362 1165L335 1160C315 1185 285 1175 280 1155L180 1138Q170 1128 180 1118ZM0 1075L35 1100L10 1118L0 1110M0 1188Q45 1185 48 1130Q35 1122 32 1140Q30 1160 0 1168"/>
          <circle cx="465" cy="1245" r="65"/><path d="M460 1190L486 1245L470 1300L446 1245Z"/><circle cx="465" cy="1245" r="10"/>
          <path d="M15 1415C20 1360 100 1345 160 1350Q225 1355 225 1380L205 1410L205 1430Q180 1415 178 1440Q160 1460 145 1435Q120 1445 120 1460Q85 1455 80 1435Q60 1470 45 1440Q15 1445 15 1415ZM225 1380C250 1440 200 1490 100 1492Q20 1490 15 1425M70 1385L88 1378M135 1366L150 1368M178 1386L186 1376M155 1405L168 1410M78 1428L88 1430M48 1405L50 1415"/><ellipse cx="117" cy="1400" rx="25" ry="17" transform="rotate(-10 117 1400)"/>
          <path d="M1386 470Q1360 500 1358 545Q1362 590 1386 610M1386 1275L1365 1278L1370 1305L1350 1330L1386 1325M1180 1490Q1185 1465 1205 1468Q1210 1500 1180 1490M1245 1500L1255 1470L1265 1500M1322 1470Q1345 1460 1348 1480Q1335 1500 1322 1490Z"/>
        </g>
      </svg>

      <div class="channel-list">
        <a class="channel" href="#">
          <svg class="channel-icon" viewBox="234 217 202 202">
            <path d="M335 229L433 268L335 311L236 268ZM236 268V280L335 322L372 306M396 296L433 280V268M270 310V335C285 378 345 375 374 361M401 310C402 335 398 345 390 352M335 334V370M346 271L385 288V375"/>
            <ellipse cx="335" cy="269" rx="11" ry="7"/><circle cx="385" cy="383" r="7"/>
            <path d="M375 394L370 413M385 396V413M396 394L401 413"/>
          </svg>
          <span>COORDENAÇÃO</span>
        </a>
        <a class="channel" href="#">
          <svg class="channel-icon" viewBox="54 94 202 202">
            <path d="M56 164V97H254V180H132M167 114H231M176 135H242M162 155H228"/>
            <circle cx="105" cy="125" r="15"/>
            <path d="M87 140H120L150 121Q160 118 160 128Q160 134 154 136L124 152V226M87 140Q77 142 74 152L64 180Q62 190 70 190Q76 190 79 181L88 153V226M104 189V247M88 248H120"/>
            <g id="pupil"><circle cx="75" cy="238" r="14"/><path d="M64 251Q57 256 57 268V293H93V268Q93 256 86 251"/></g>
            <use href="#pupil" x="53.500"/><use href="#pupil" x="107"/><use href="#pupil" x="160"/>
          </svg>
          <span>PROFESSOR</span>
        </a>
        <a class="channel" href="#">
          <svg class="channel-icon" viewBox="54 630 202 202">
            <path d="M114 633H196V693H114ZM155 693V704M57 705H253V718H57ZM61 718V828H116V746M251 718V828H195V746M61 746H251M61 772H116M61 800H116M195 772H251M195 800H251M113 718V746M195 718V746M146 732H164M79 760H97M79 786H97M79 813H97M213 760H231M213 786H231M213 813H231"/>
            <path d="M67 704V682H87V704M88 686Q99 684 98 692Q98 699 88 698M74 674L77 667M78 666L82 660M218 704V672H231M232 704V665H247V704"/>
          </svg>
          <span>SECRETARIA</span>
        </a>
      </div>
    </main>

    <nav class="tab-bar">
      <svg class="tab-shape" viewBox="0 0 924 116">
        <path d="M0 0H924V6C924 86 896 116 814 116H110C28 116 0 86 0 6Z"/>
      </svg>
      <a class="tab" href="#">
        <svg viewBox="159 128 234 234">
          <path d="M277 178C264 152 245 145 220 152C195 160 190 164 162 165V319C190 319 197 312 217 306C242 298 258 302 270 317M277 178C290 152 309 145 334 152C359 160 364 164 390 165V319C364 319 357 312 337 306C312 298 296 302 284 317M277 189V307M160 334C185 332 195 326 217 319C242 311 260 316 268 328Q277 334 286 328C296 314 312 311 337 319C359 326 368 332 393 335"/>
        </svg>
      </a>
      <a class="tab" href="#">
        <svg viewBox="714 128 234 234">
          <path d="M853 300H717V206H914V220M725 193L734 155L892 192M768 150L775 131L872 173M783 222H752Q736 235 733 244V266Q741 275 750 285H783M841 222H876"/>
          <circle cx="811" cy="253" r="33"/>
          <path d="M864 244V338Q864 347 890 351M945 244V340"/>
          <ellipse cx="905" cy="245" rx="40" ry="11"/>
          <path d="M866 259Q906 281 945 259M866 274Q906 296 945 274M866 289Q906 311 945 289M866 304Q906 326 945 304M866 319Q906 341 945 319M866 334Q906 356 945 334"/>
          <text x="811" y="266" text-anchor="middle">$</text>
        </svg>
      </a>
      <a class="tab" href="#">
        <svg class="house" viewBox="0 0 78 78">
          <path d="M2 32L39 5L76 32M10.500 37V76M67.500 37V76M30 76V52Q30 43 39 43Q48 43 48 52V76"/>
        </svg>
      </a>
      <a class="tab" href="#">
        <span class="tab-active">
          <svg viewBox="437 128 234 234">
            <path d="M526 212C525 145 646 145 646 216C646 236 638 247 630 252Q627 262 638 272V276Q620 275 610 266Q602 270 587 268"/>
            <path d="M474 305C430 250 480 213 524 213C560 213 585 237 585 268C584 315 530 330 498 317Q490 326 472 327V323Q481 317 474 305ZM568 201H617M553 201H556M563 223H617M507 260H556M492 260H495M492 282H556"/>
          </svg>
        </span>
      </a>
      <a class="tab" href="#">
        <svg viewBox="990 125 234 234">
          <path d="M1012 213L1031 160Q1034 154 1042 154H1173Q1181 154 1184 160L1202 213M1008 215H1206L1216 226Q1221 232 1221 240V295H994V240Q994 232 999 226ZM994 295V315Q994 330 1008 330H1025Q1043 330 1043 300M1221 295V315Q1221 330 1207 330H1190Q1172 330 1172 300M1016 242H1060V274H1016ZM1156 242H1200V274H1156ZM1080 250H1136M1080 268H1136M1123 213C1124 178 1183 178 1185 213"/>
        </svg>
      </a>
      <span class="home-indicator"></span>
    </nav>
  </div>
  <script src="script.js"></script>
</body>
</html>
```
FILE: styles.css
```css
body {
  margin: 0;
  background-color: #fefefe;
  font-family: Inter, 'Liberation Sans', sans-serif;
}
.screen {
  width: 924px;
  height: 2000px;
  display: flex;
  flex-direction: column;
  overflow: hidden;
}

/* header */
.header {
  position: relative;
  height: 156px;
  box-sizing: border-box;
  padding-top: 33px;
}
.header-shape {
  position: absolute;
  inset: 0;
  z-index: -1;
  fill: #1976d2;
}
.status-bar {
  display: flex;
  justify-content: space-between;
  align-items: center;
  height: 36px;
  padding: 0 46px 0 80px;
}
.time {
  font-size: 35px;
  font-weight: 600;
  letter-spacing: 0.6px;
  color: #000;
}
.title-bar {
  display: grid;
  grid-template-columns: 1fr auto 1fr;
  padding: 0 22px;
}
.title-bar h1 {
  margin: 16px 0 0;
  font-size: 37px;
  line-height: 50px;
  font-weight: 600;
  letter-spacing: -0.4px;
  color: #fff;
}
.menu-btn {
  display: flex;
  flex-direction: column;
  gap: 11px;
  width: 45px;
  height: 30px;
  margin-top: 18px;
  padding: 0;
  border: none;
  background: none;
}
.menu-btn span {
  height: 2px;
  background-color: #e8f1fb;
}

/* student */
.student {
  position: relative;
  display: flex;
  align-items: center;
  height: 179px;
  padding-left: 221px;
  background-color: #fefefe;
}
.student-name {
  margin: 0 0 3px 13px;
  font-size: 31px;
  letter-spacing: -0.35px;
  color: #000;
}
.page-dot {
  position: absolute;
  left: 454px;
  top: 107px;
  width: 16px;
  height: 16px;
  border-radius: 50%;
  background-color: #808080;
}

/* content */
.content {
  position: relative;
  flex: 1;
  background-color: #e4dcd6;
}
.wallpaper {
  position: absolute;
  inset: 0;
  width: 924px;
  height: 1547px;
}
.doodle, .doodle path, .doodle circle, .doodle ellipse, .doodle rect {
  fill: none;
  stroke: #d6cdc6;
  stroke-width: 1.7px;
  stroke-linejoin: round;
  stroke-linecap: round;
}
.wallpaper path, .wallpaper circle, .wallpaper ellipse, .wallpaper rect {
  vector-effect: non-scaling-stroke;
}
.doodle .strong {
  stroke: #d3c9c2;
  stroke-width: 2px;
}
.doodle .ink, .doodle .ink circle {
  fill: #d6cdc6;
  stroke: none;
}
.doodle .dots {
  stroke-width: 2.5px;
  stroke-dasharray: 0 10;
}
.doodle .digits {
  stroke: #d3c9c2;
  stroke-width: 2.6px;
  stroke-dasharray: 8 2;
}
.channel-list {
  position: relative;
  isolation: isolate;
  display: flex;
  flex-direction: column;
  gap: 22.5px;
  margin: 22px 22px 0;
  padding: 11px 11.5px 40px;
  overflow: hidden;
}
.channel {
  position: relative;
  display: flex;
  align-items: center;
  gap: 36px;
  height: 156px;
  padding-left: 44.5px;
  border-radius: 22px;
  background-color: #cce2fa;
  color: #3b444b;
  font-size: 37px;
  font-weight: 600;
  text-decoration: none;
}
.channel span {
  margin-bottom: 3px;
}
/* shadow stays under the neighbouring cards */
.channel::before {
  content: '';
  position: absolute;
  inset: 0;
  z-index: -1;
  border-radius: 22px;
  box-shadow: 0 1px 20px rgba(20, 18, 0, 0.85);
}
.channel-icon {
  width: 67px;
  height: 67px;
  fill: none;
  stroke: #3b444b;
  stroke-width: 6;
}

/* bottom tabs */
.tab-bar {
  position: relative;
  display: flex;
  align-items: center;
  height: 116px;
  border-top: 2px solid #85888c;
}
.tab-shape {
  position: absolute;
  inset: 0;
  fill: #1976d2;
}
.tab {
  position: relative;
  flex: 1;
  display: flex;
  justify-content: center;
  margin-top: -2px;
}
.tab svg {
  width: 78px;
  height: 78px;
  fill: none;
  stroke: #fff;
  stroke-width: 7;
}
.tab svg text {
  fill: #fff;
  stroke: none;
  font-size: 38px;
  font-weight: 700;
}
.tab .house {
  stroke-width: 4.2;
  stroke-linecap: round;
}
.tab-active {
  display: flex;
  align-items: center;
  justify-content: center;
  width: 117px;
  height: 85px;
  border-radius: 22px;
  background-color: #fff;
}
.tab .tab-active svg {
  stroke: #1976d2;
  stroke-width: 6;
  stroke-linecap: round;
}
.home-indicator {
  position: absolute;
  left: 297px;
  top: 87px;
  width: 330px;
  height: 11px;
  border-radius: 6px;
  background: linear-gradient(to right, #111, #222 15%, #111 50%, #222 75%, #000);
}
```
FILE: script.js
```js
const NS = 'http://www.w3.org/2000/svg';

// bubbles between the drawings: x, y, radius
const bubbles = {
  top: '227,46,12 484,50,13 436,68,8 954,48,20 1020,30,12 1072,16,9 1149,14,11 10,4,10 10,318,9 88,163,11 88,243,14 327,565,10 677,588,12 483,1130,22 483,1130,8 2476,42,12 2551,51,11 2695,60,30 2622,65,10 2736,155,11 2686,165,14 2743,371,12 2730,452,15 2732,525,17 2703,624,15 2757,655,13 1750,20,14 1900,40,11 2200,30,18 1420,30,12',
  a: '652,76,9 703,62,9 881,63,9 679,157,16 678,203,8 707,247,21 815,269,9 870,258,11 884,301,16 921,338,11 1009,344,18 1052,329,9 1119,331,8 897,142,9 1169,152,18 1217,169,13 1182,224,11 1281,210,22 1135,258,10 1367,193,11 220,223,13 235,347,21 39,370,18 35,455,11 276,404,10 308,424,9 341,386,13 416,384,12 505,379,16 482,334,9 552,319,13 502,300,10 652,305,13 822,516,15 861,551,10 904,560,10 915,612,20 978,591,9 1027,608,15 1134,525,14 1160,477,9 1308,551,10 1357,537,20 1267,598,11 1197,613,20 1157,652,11 1180,688,16 1288,653,11 1317,716,16 1270,747,11 1323,776,15 879,651,12 893,709,20 898,772,10 868,844,8 1226,686,5 974,853,20 1030,851,12 1096,857,17 1014,886,8 968,917,12 277,622,12 520,780,12 573,783,16 476,810,11 432,823,10 453,862,13 431,909,10 521,917,15 279,845,16 170,881,8 213,889,13 261,891,16 145,920,14 296,947,12 354,993,12 454,1056,15 478,1093,9 88,1085,15 299,1131,9 114,1160,10 181,1168,16 173,1219,20 210,1257,15 113,1272,13 342,1171,15 311,1200,13 636,1257,17 618,1312,20 664,1337,12 583,1350,12 588,1392,11 114,1396,9 197,1398,16 1028,1081,12 991,1107,12 1022,1130,8 1251,1081,12 1226,1125,15 1017,1347,14 1165,1373,16 1226,1405,19 995,1406,19 943,1426,13 1213,1443,9 1247,1469,13 1187,1482,12 976,1481,9 698,1489,15 587,50,20',
  b: '201,64,14 237,97,9 508,62,17 631,77,11 752,64,20 794,92,11 145,167,13 156,203,8 138,245,8 22,197,13 470,119,17 544,131,21 601,141,12 499,161,9 835,154,10 795,195,9 824,247,11 1017,198,11 1163,235,16 1257,191,23 1327,156,16 1310,224,12 1251,297,14 1293,382,12 1259,438,19 1322,428,10 671,346,17 173,315,12 157,373,17 868,446,13 940,435,12 992,448,12 963,388,9 940,494,20 1034,483,13 1109,557,11 1109,604,11 33,522,9 679,705,14 709,752,19 772,743,10 751,797,11 680,800,12 688,842,12 691,899,15 737,929,6 900,759,18 909,722,10 1203,774,13 1229,853,19 1280,827,13 1334,838,11 1338,903,16 1355,979,13 1355,1048,13 1122,932,12 1136,976,20 1101,1028,12 954,962,14 956,1002,6 911,1028,11 849,1034,7 885,977,21 826,974,18 348,744,15 176,808,13 12,885,8 45,928,12 73,996,20 116,984,9 106,1031,12 285,979,11 313,999,13 566,1016,11 638,1013,13 618,1051,7 576,1074,9 600,1129,17 121,1167,9 55,1200,16 14,1262,10 64,1302,12 336,1269,12 257,1298,12 292,1325,11 353,1321,17 698,1300,10 1053,1195,8 1095,1179,14 1112,1242,20 1052,1246,11 1128,1286,11 1097,1339,11 1134,1370,10 1315,1341,21 547,1407,10 593,1410,13 410,1474,10 432,1521,12 102,1514,19 1376,55,20 1380,210,13',
  c: '64,403,16 127,411,12 150,581,14 191,599,11 247,602,8 123,630,14 20,686,9 5,752,20 16,818,9 69,826,11 138,849,20 66,888,10 100,925,16 156,928,16 429,657,26 497,643,16 552,636,13 603,639,17 445,717,11 497,727,16 560,766,12 596,817,9 570,860,20 701,826,10 548,513,16 564,555,10 621,566,19 644,614,10 768,564,12 833,577,20 909,540,11 889,186,10 927,210,11 922,250,13 1289,240,9 1097,359,9 1096,439,15 1087,499,21 1139,485,15 1359,353,10 1367,412,13 1349,452,10 1336,617,11 1293,650,12 1251,685,15 1299,708,10 1344,689,19 1241,805,9 1229,862,16 1271,885,12 1286,983,24 1013,991,12 1056,1041,16 1279,1046,10 1342,1046,15 1298,1104,12 1257,1155,22 1205,1170,12 1231,1207,9 1307,1194,10 1317,1247,18 1129,1186,11 1107,1231,10 1193,1270,13 1112,1288,20 1049,1315,14 1009,1260,9 960,1336,9 941,1389,11 1115,1361,10 1172,1392,10 1158,1452,19 1222,1443,10 1287,1449,13 1348,1478,10 953,1465,13 867,1328,9 785,1328,12 813,1272,19 738,1277,12 702,1316,9 674,1186,15 671,1246,14 489,1260,14 389,1258,20 331,1307,20 262,1310,14 153,1312,14 433,1312,10 384,1353,17 343,1401,13 531,1364,15 536,1446,14 573,1481,13 355,1470,19 290,1482,9 246,1490,12 460,1495,14 285,1231,9 90,1242,19 14,1247,11 271,1070,15 297,1138,17 225,1123,9 250,1162,10 351,1164,9 311,958,12 356,946,15 404,952,11 899,1495,18 140,1495,15',
  d: '116,157,12 176,222,12 247,167,12 242,217,10 199,272,19 27,408,14 82,388,16 150,377,12 327,333,10 472,243,9 474,151,21 442,306,16 595,337,15 608,406,9 605,461,11 653,458,12 655,510,10 271,526,17 238,485,7 425,553,11 471,553,13 398,601,18 326,580,8 388,652,10 666,654,10 635,688,12 712,683,15 748,671,10 627,736,11 875,525,12 931,187,13 987,171,20 1093,99,12 1102,142,14 1143,130,13 1182,121,9 1222,150,18 1286,126,20 1364,191,16 1151,200,14 1259,186,9 1282,240,14 1069,319,10 1057,370,15 1100,383,10 1032,411,8 1286,418,15 1326,459,14 1272,485,12 1153,431,12 1170,486,18 1228,513,16 1188,560,12 1235,634,13 1360,636,8 1169,717,16 1101,784,12 1155,794,10 1162,869,21 1209,874,11 1326,860,15 1353,988,19 954,787,11 1055,837,9 956,848,9 885,819,22 842,849,15 662,892,10 690,929,15 806,937,12 369,892,18 260,974,11 219,990,15 110,1007,12 157,1021,10 76,1068,19 130,1096,17 107,1139,11 153,1171,11 77,1204,21 127,1217,9 226,1200,18 293,1226,13 359,1219,9 260,1260,10 352,1276,13 422,1141,22 545,1183,12 601,1204,16 571,1243,11 615,1141,12 47,1266,8 89,1299,18 148,1296,15 219,1303,10 500,1335,10 594,1297,13 670,1279,16 728,1291,10 789,1316,17 847,1281,19 918,1284,12 988,1255,26 928,1130,18 948,1178,14 1090,1015,10 1141,1031,10 1112,1073,17 1270,1187,11 1200,1214,19 1302,1233,15 1240,1280,21 1188,1309,13 1296,1300,12 1125,1353,10 1366,1397,10 1134,1447,9 1064,1486,11 856,1377,15 908,1403,9 937,1446,10 869,1455,15 801,1413,8 757,1364,9 682,1338,8 636,1361,19 757,1480,19 656,1476,13 461,1474,12 283,1444,15 10,1312,24'
};

// repeated drawings: shape, x, y, scale, rotation
const stamps = {
  top: [['star', 28, 118, 1, 10], ['star', 345, 18, 1, 0], ['sparkle', 580, 45, .9, 0], ['cloud', 95, 265, .85, 0], ['sparkle', 5, 405, 1, 0], ['star', 35, 870, 1, 0]],
  a: [['mail', 133, 122, 1, 0], ['star', 324, 105, .95, 0], ['gear', 24, 262, 1.1, 0], ['sparkle', 160, 277, 1.1, -4], ['sparkle', 191, 442, .75, 10], ['star', 1108, 409, 1, 15],
    ['heart', 1229, 527, .75, -12], ['sparkle', 575, 546, 1, 0], ['star', 562, 860, 1, 15], ['bolt', 360, 877, 1, 0], ['star', 368, 1093, 1.3, 0], ['heart', 760, 1028, .6, 0],
    ['star', 639, 1173, .95, 5], ['drop', 72, 1320, 1, 0], ['heart', 188, 1318, 1, 5], ['drop', 24, 1386, .85, 10], ['sparkle', 916, 1528, .75, 10], ['sparkle', 1262, 1532, .75, 10]],
  b: [['sparkle', 865, 68, .95, 0], ['star', 367, 127, 1, 0], ['note', 1122, 152, 1, 0], ['bolt', 1270, 102, .75, 25], ['star', 78, 280, 1, 10], ['star', 1338, 318, 1, 15], ['sparkle', 1154, 680, .95, 0],
    ['camera', 550, 820, .95, 0], ['gear', 118, 895, .9, 0], ['sparkle', 600, 927, .9, 40], ['star', 192, 988, 1.2, -5], ['star', 1041, 973, 1, 10], ['star', 1127, 1093, 1, 20],
    ['star', 145, 1268, 1.5, 10], ['drop', 694, 1245, .6, 25], ['drop', 824, 1243, .65, 0], ['drop', 890, 1256, .6, 0], ['star', 1191, 1328, 1, 10], ['note', 1200, 1445, .95, 6], ['heart', 1352, 1432, 1, -12], ['sparkle', 485, 1447, .95, 0]],
  c: [['star', 20, 222, 1, 20], ['heart', 936, 342, 1, -3], ['car', 1226, 364, 1, 0], ['star', 160, 484, 1, 15], ['star', 740, 634, 1.3, 10], ['sparkle', 230, 1000, 1, 0], ['cloud', 912, 932, .95, 0],
    ['sparkle', 954, 1036, 1, 0], ['gear', 1033, 1144, 1, 0], ['star', 203, 1238, 1.1, 15], ['star', 925, 1268, 1.1, 15], ['bolt', 580, 1312, 1, -50], ['cloud', 55, 1343, .75, -20], ['planet', 203, 1403, .95, -25],
    ['star', 464, 1409, 1.1, 15], ['cloud', 685, 1403, 1, 0], ['sparkle', 867, 1412, .75, 10], ['planet', 1267, 1343, 1, 0], ['star', 40, 1485, 1.1, 20]],
  d: [['sparkle', 1068, 231, .75, 10], ['heart', 1293, 565, .95, 20], ['star', 1162, 645, 1, 15], ['sparkle', 356, 812, .75, 10], ['camera', 527, 815, 1, 0], ['star', 752, 1005, 1, 0], ['star', 1169, 953, 1, 0],
    ['gear', 1273, 940, .9, 0], ['car', 1250, 1092, 1, 0], ['drop', 988, 1066, .9, 0], ['cloud', 1061, 1158, 1, 0], ['mail', 772, 1172, 1, 0], ['gear', 1115, 1270, 1, 0], ['sparkle', 292, 1338, 1, 0],
    ['heart', 425, 1369, .75, -20], ['cloud', 557, 1420, 1, 10], ['star', 712, 1418, 1, 15], ['planet', 1017, 1382, 1, 25], ['cloud', 1245, 1391, 1.05, 0], ['star', 375, 1475, 1.1, 20]]
};

// areas a and b are stretched vertically, keep small shapes round there
const ratio = { top: 1, a: 0.933, b: 0.933, c: 1, d: 1 };

function add(area, tag, attrs) {
  const el = document.createElementNS(NS, tag);
  for (const name in attrs) {
    el.setAttribute(name, attrs[name]);
  }
  document.getElementById('area-' + area).appendChild(el);
}

for (const area in bubbles) {
  for (const item of bubbles[area].split(' ')) {
    const [cx, cy, r] = item.split(',');
    add(area, 'ellipse', { cx, cy, rx: r, ry: r * ratio[area] });
  }
}

for (const area in stamps) {
  for (const [shape, x, y, scale, angle] of stamps[area]) {
    add(area, 'use', {
      href: '#' + shape,
      transform: `translate(${x} ${y}) scale(1 ${ratio[area]}) rotate(${angle}) scale(${scale})`
    });
  }
}
```
